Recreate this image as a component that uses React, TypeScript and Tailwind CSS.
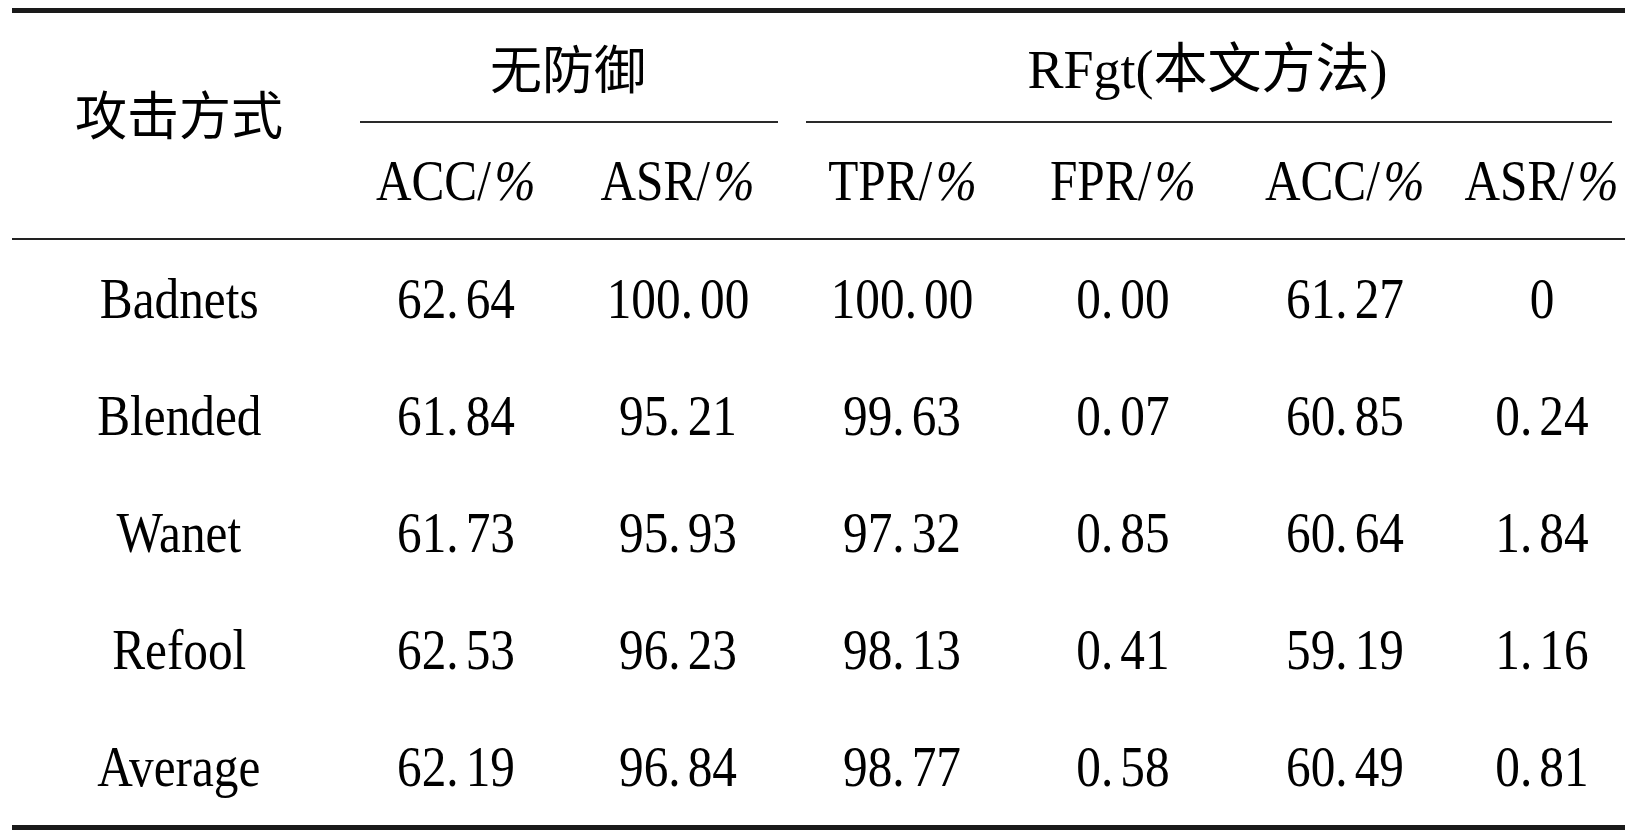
const ROWS = [
  { name: "Badnets", values: ["62.64", "100.00", "100.00", "0.00", "61.27", "0"] },
  { name: "Blended", values: ["61.84", "95.21", "99.63", "0.07", "60.85", "0.24"] },
  { name: "Wanet", values: ["61.73", "95.93", "97.32", "0.85", "60.64", "1.84"] },
  { name: "Refool", values: ["62.53", "96.23", "98.13", "0.41", "59.19", "1.16"] },
  { name: "Average", values: ["62.19", "96.84", "98.77", "0.58", "60.49", "0.81"] },
];

// column widths, left to right after the first one
const VALUE_COLS = ["w-[220px]", "w-[224px]", "w-[224px]", "w-[218px]", "w-[226px]", "w-[167px]"];
const SUB_HEADERS = ["ACC", "ASR", "TPR", "FPR", "ACC", "ASR"];

const serif = "font-['Liberation_Serif','Noto_Sans_CJK_SC',serif]";
const cjk = "font-['Noto_Sans_CJK_SC','Noto_Sans_CJK_JP',sans-serif]";

function Num({ value }: { value: string }) {
  const [int, frac] = value.split(".");
  return (
    <span className="inline-block scale-x-[0.88] whitespace-nowrap">
      {int}
      {frac !== undefined && (
        <>
          <span className="mr-[8px]">.</span>
          {frac}
        </>
      )}
    </span>
  );
}

export default function App() {
  return (
    <div className={`w-[1635px] h-[839px] bg-white text-black ${serif}`}>
      <div className="pt-[8px] ml-[12px] w-[1613px]">
        {/* top rule */}
        <div className="h-[5px] bg-[#1a1a1a]" />

        {/* header */}
        <div className="flex">
          <div className={`w-[334px] h-[225px] flex items-center justify-center pb-[25px] text-[52px] leading-none ${cjk}`}>
            攻击方式
          </div>
          <div className="flex flex-col">
            <div className="flex h-[110px]">
              <div className="w-[444px] flex flex-col">
                <div className={`flex-1 flex items-center justify-center text-[52px] leading-none ${cjk}`}>
                  无防御
                </div>
                <div className="h-[2px] bg-[#2a2a2a] ml-[14px] mr-[12px]" />
              </div>
              <div className="w-[835px] flex flex-col">
                <div className="flex-1 flex items-center justify-center text-[54px] leading-none">
                  <span className="whitespace-nowrap">
                    RFgt(<span className={cjk}>本文方法</span>)
                  </span>
                </div>
                <div className="h-[2px] bg-[#2a2a2a] ml-[16px] mr-[13px]" />
              </div>
            </div>
            <div className="flex h-[115px]">
              {SUB_HEADERS.map((h, i) => (
                <div key={i} className={`${VALUE_COLS[i]} flex items-center justify-center text-[56px] leading-none`}>
                  <span className="inline-block scale-x-[0.88] whitespace-nowrap">
                    {h}/<span className="ml-[4px] italic">%</span>
                  </span>
                </div>
              ))}
            </div>
          </div>
        </div>

        {/* header rule */}
        <div className="h-[2px] bg-[#222]" />

        {/* body */}
        {ROWS.map((row) => (
          <div key={row.name} className="flex h-[117px] text-[56px] leading-none">
            <div className="w-[334px] flex items-center justify-center">
              <span className="inline-block scale-x-[0.88]">{row.name}</span>
            </div>
            {row.values.map((v, i) => (
              <div key={i} className={`${VALUE_COLS[i]} flex items-center justify-center`}>
                <Num value={v} />
              </div>
            ))}
          </div>
        ))}

        {/* bottom rule */}
        <div className="h-[5px] bg-[#1a1a1a]" />
      </div>
    </div>
  );
}
